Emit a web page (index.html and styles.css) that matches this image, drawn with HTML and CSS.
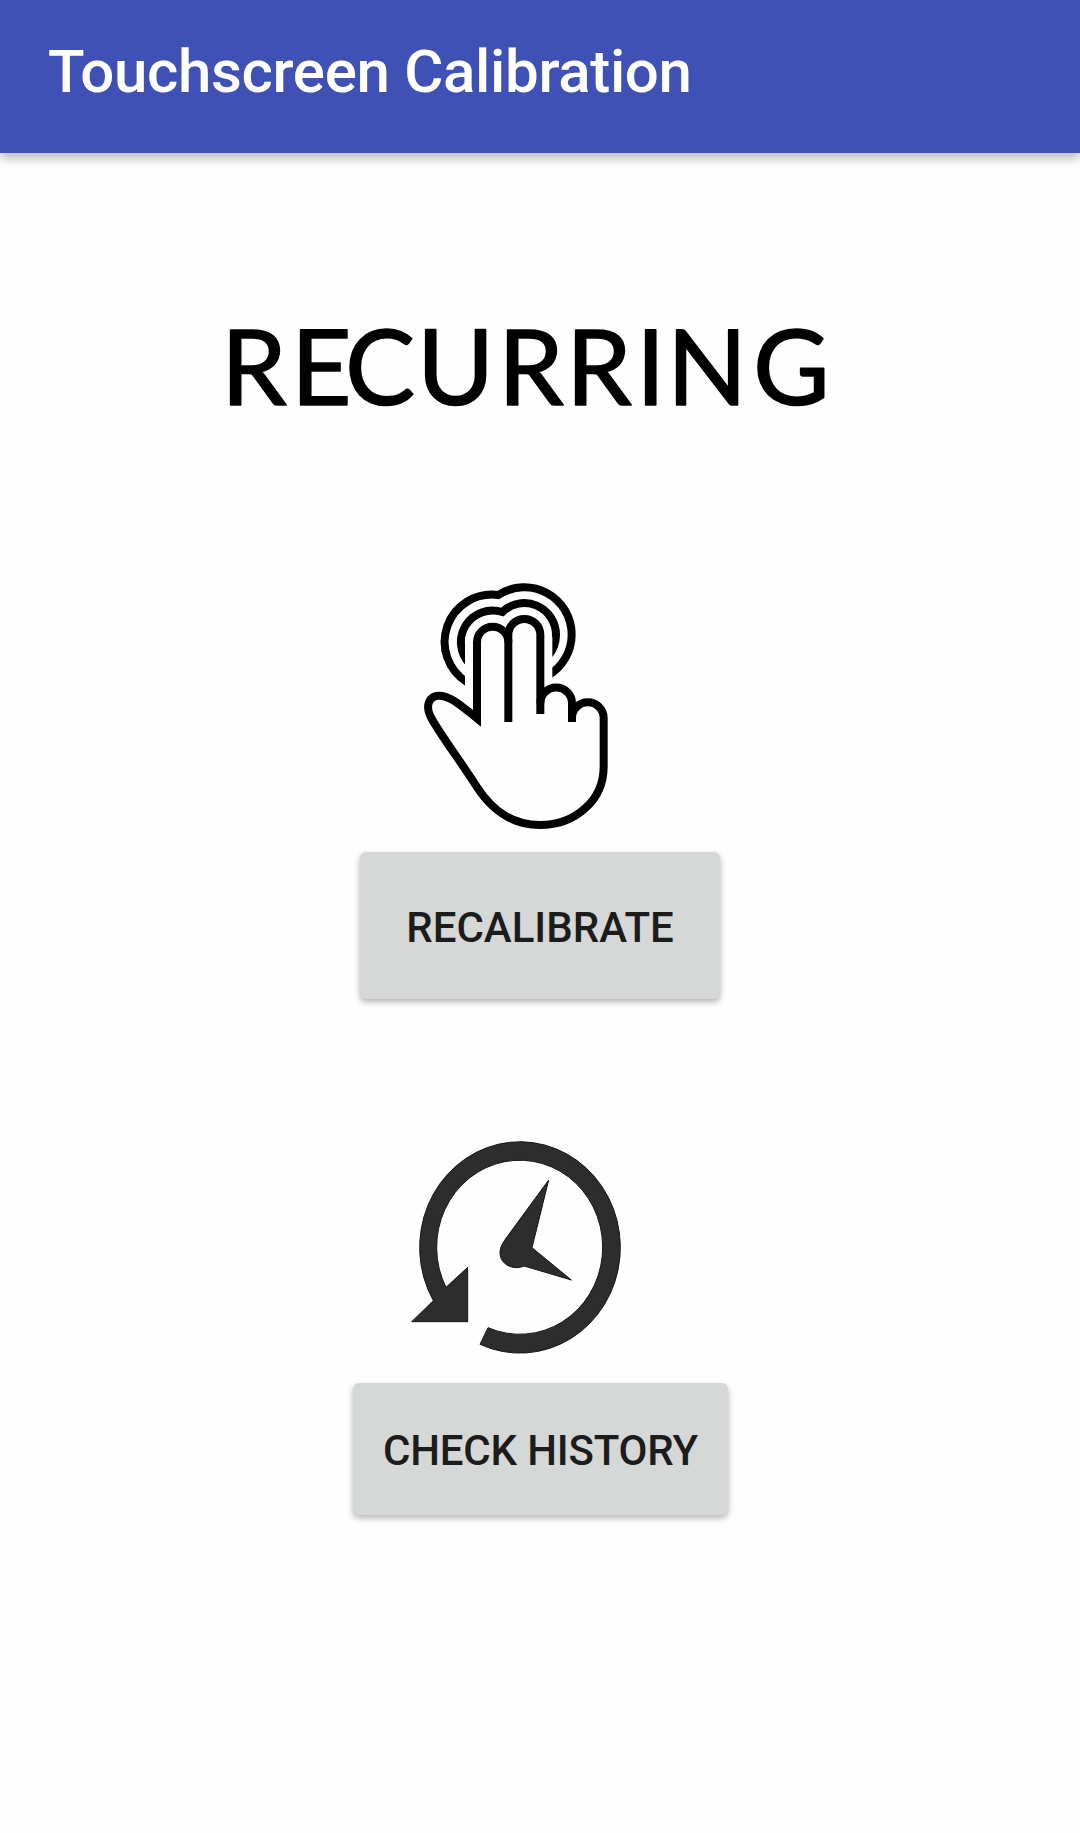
FILE: index.html
```html
<!DOCTYPE html>
<html lang="en">
<head>
<meta charset="utf-8">
<title>Touchscreen Calibration</title>
<link rel="stylesheet" href="styles.css">
</head>
<body>
<header class="app-bar"><h1 class="title">Touchscreen Calibration</h1></header>
<main class="content">
  <svg class="wordmark" viewBox="0 0 640 150" role="img" aria-label="Recurring">
    <text y="115" x="1 71 125 197 278 346 416 447 533">RECURRING</text>
  </svg>
  <svg class="hand" viewBox="0 0 780 810" aria-hidden="true">
    <clipPath id="ripple"><path d="M0 0H780V810H427V200H165V810H0Z"/></clipPath>
    <g fill="none" stroke="#000" stroke-width="24">
      <g clip-path="url(#ripple)">
        <path d="M172 337A142 142 0 0 1 265 75A142 142 0 0 1 485 194A142 142 0 0 1 415 316"/>
        <path d="M180 283A95 95 0 0 1 277 126A95 95 0 0 1 438 195A95 95 0 0 1 415 257"/>
      </g>
      <path d="M295 456V195a48 48 0 0 1 96 0V432"/>
      <path d="M391 400a47.500 47.500 0 0 1 95 0V456"/>
      <path stroke-miterlimit="8" d="M295 217a47 47 0 0 0 -94 0V445C150 404 120 377 87 377C57 377 46 407 61 438C79 478 163 590 200 650C250 727 310 765 390 765C497 765 581 690 581 590V444a47.500 47.500 0 0 0 -95 0"/>
    </g>
  </svg>
  <button class="button recalibrate">RECALIBRATE</button>
  <svg class="clock" viewBox="0 0 840 720" aria-hidden="true">
    <g fill="#2d2d2d" stroke="#161616" stroke-width="3">
      <path d="M240 643A301 317 0 1 0 100 512L35 575H203V412L138 472A249 261 0 1 1 264 593Z"/>
      <path d="M446 150L396 353L514 450L372 408C342 422 298 405 300 365C301 350 308 340 315 329Z"/>
    </g>
  </svg>
  <button class="button history">CHECK HISTORY</button>
</main>
</body>
</html>
```

FILE: styles.css
```css
* { box-sizing: border-box; }
body {
  margin: 0;
  min-height: 1833px;
  background: #fefefe;
  font-family: Roboto, sans-serif;
}
.app-bar {
  height: 153px;
  padding: 37px 48px 0;
  background: #3f51b5;
  box-shadow: 0 5px 10px rgba(0, 0, 0, .28);
}
.title {
  margin: 0;
  color: #fff;
  font-size: 60px;
  font-weight: 500;
  letter-spacing: -.32px;
  line-height: 70px;
}
.content {
  display: flex;
  flex-direction: column;
  align-items: center;
  padding-top: 137px;
}
.wordmark { width: 640px; height: 150px; overflow: visible; }
.wordmark text {
  font: 400 105px Lato, sans-serif;
  stroke: #000;
  stroke-width: 1.5px;
  stroke-linejoin: round;
}
.hand { width: 260px; height: 270px; margin-top: 130px; }
.clock { width: 280px; height: 240px; margin-top: 131px; }
.button {
  border: 0;
  border-radius: 6px;
  background: #d6d8d7;
  box-shadow: 0 3px 6px rgba(0, 0, 0, .3);
  color: #1c1c1c;
  font: 500 42px/48px Roboto, sans-serif;
  white-space: nowrap;
}
.recalibrate { width: 360px; height: 147px; margin-top: 12px; padding: 5px 0 0; }
.history {
  width: 375px;
  height: 132px;
  margin: 13px 0 0 1px;
  padding: 3px 0 0;
  letter-spacing: -.18px;
}
```
